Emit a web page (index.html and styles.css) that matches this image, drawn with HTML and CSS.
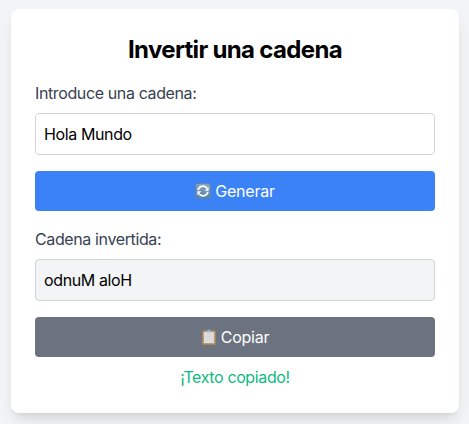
FILE: index.html
```html
<!DOCTYPE html>
<html lang="es">
<head>
<meta charset="utf-8">
<title>Invertir una cadena</title>
<link rel="stylesheet" href="styles.css">
</head>
<body>
<main class="card">
  <h1 class="title">Invertir una cadena</h1>
  <label class="label" for="source">Introduce una cadena:</label>
  <input class="field" id="source" type="text" value="Hola Mundo">
  <button class="button button-primary" type="button">
    <svg class="icon" viewBox="0 0 16 16" aria-hidden="true">
      <defs><linearGradient id="tile" x1="0" y1="0" x2="0" y2="1"><stop offset="0" stop-color="#8ba6be"/><stop offset="1" stop-color="#5681af"/></linearGradient></defs>
      <rect x=".5" y=".5" width="15" height="15" rx="2.2" fill="url(#tile)" stroke="#62809f" stroke-width=".6"/>
      <g fill="none" stroke="#fff" stroke-width="1.7">
        <path d="M3.2 7.2C3.8 3.2 9 1.8 12 5.1"/>
        <path d="M12.8 8.8C12.2 12.8 7 14.2 4 10.9"/>
      </g>
      <path d="M13.6 3.8v3.9H9.7zM2.4 12.2V8.3h3.9z" fill="#fff"/>
    </svg>
    <span>Generar</span>
  </button>
  <label class="label" for="result">Cadena invertida:</label>
  <input class="field field-readonly" id="result" type="text" value="odnuM aloH" readonly>
  <button class="button button-secondary" type="button">
    <svg class="icon" viewBox="0 0 16 16" aria-hidden="true">
      <rect x="1.2" y="1.5" width="13.6" height="14.3" rx=".8" fill="#b18a5b"/>
      <path d="M2.8 3h10.4v11.2H2.8z" fill="#dedede"/>
      <path d="M3 5.5h10M3 7.5h10M3 9.5h10M3 11.5h10" stroke="#cfcfcf" stroke-width=".5"/>
      <path d="M4.3 3.3V1.8h2.2C6.7-.1 9.3-.1 9.5 1.8h2.2v1.5z" fill="#a4abb2"/>
    </svg>
    <span>Copiar</span>
  </button>
  <p class="message">¡Texto copiado!</p>
</main>
</body>
</html>
```
FILE: styles.css
```css
* { box-sizing: border-box; }
body {
  margin: 0;
  padding: 9px 10px 11px 11px;
  height: 424px;
  overflow: hidden;
  background: #f3f4f6;
  color: #000;
  font: 16px/24px Inter, "Liberation Sans", sans-serif;
  letter-spacing: -0.38px;
}
.card {
  width: 448px;
  padding: 24px;
  border-radius: 8px;
  background: #fff;
  box-shadow: 0 10px 15px -3px rgb(0 0 0 / .1), 0 4px 6px -4px rgb(0 0 0 / .1);
}
.title {
  margin: 0 0 16px;
  font-size: 24px;
  line-height: 34px;
  height: 32px;
  font-weight: 700;
  letter-spacing: -0.67px;
  text-align: center;
}
.label {
  display: block;
  margin-bottom: 8px;
  color: #374151;
}
.field {
  display: block;
  width: 100%;
  height: 42px;
  margin: 0 0 16px;
  padding: 8px;
  border: 1px solid #d1d5db;
  border-radius: 4px;
  outline: none;
  background: #fff;
  color: #000;
  font: inherit;
  letter-spacing: inherit;
}
.field-readonly { background: #f3f4f6; }
.button {
  display: flex;
  align-items: center;
  justify-content: center;
  gap: 4px;
  width: 100%;
  height: 40px;
  margin: 0 0 16px;
  padding: 8px 16px;
  border: 0;
  border-radius: 4px;
  color: #fff;
  font: inherit;
  letter-spacing: -0.25px;
}
.button-primary { background: #3b82f6; }
.button-secondary { margin-bottom: 8px; background: #6b7280; }
.icon { width: 16px; height: 16px; }
.message {
  margin: 0;
  color: #10b981;
  text-align: center;
}
```
